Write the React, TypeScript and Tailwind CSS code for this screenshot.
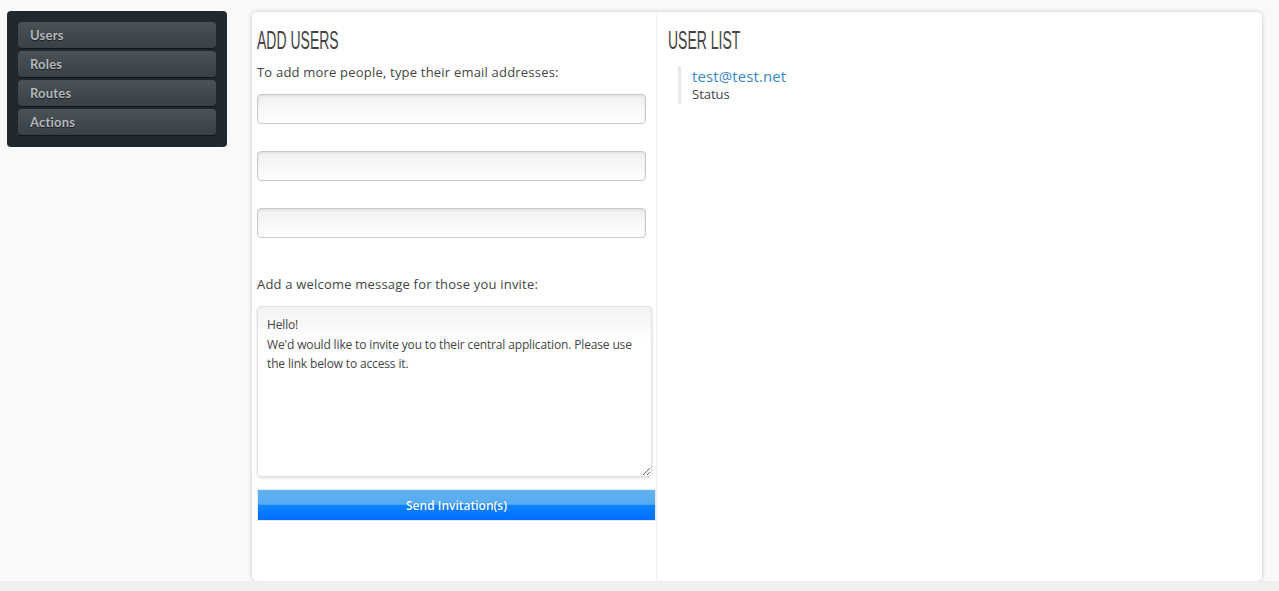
import React from "react";

const navItems = ["Users", "Roles", "Routes", "Actions"];

function EmailInput() {
  return (
    <input
      type="text"
      className="block w-[389px] h-[30px] rounded-[4px] border border-[#c9c9c9] bg-gradient-to-b from-[#f0f0f0] to-white shadow-[inset_0_1px_3px_rgba(0,0,0,0.08)] outline-none"
    />
  );
}

function Heading({ children }: { children: React.ReactNode }) {
  return (
    <h2 className="h-[30px] text-[25px] leading-[30px] text-[#444] font-['Liberation_Sans',sans-serif] whitespace-nowrap">
      <span className="inline-block origin-left scale-x-[0.56]">{children}</span>
    </h2>
  );
}

export default function App() {
  return (
    <div className="min-h-[591px] w-[1279px] bg-[#f9f9f9] flex flex-col font-['Open_Sans',sans-serif] text-[#444]">
      <div className="flex items-start h-[581px]">
        <nav className="ml-[7px] mt-[11px] w-[220px] rounded-[4px] bg-[#22292e] px-[11px] pt-[11px] pb-[12px] flex flex-col gap-[3px]">
          {navItems.map((n) => (
            <div
              key={n}
              className="h-[26px] rounded-[4px] bg-gradient-to-b from-[#4b5257] to-[#3a4146] shadow-[0_1px_1px_rgba(0,0,0,0.5)] pl-[12px] pt-[1px] flex items-center text-[13px] font-bold text-[#b3b8bd] [text-shadow:0_1px_1px_rgba(0,0,0,0.6)] font-['Lato',sans-serif] tracking-[0.2px]"
            >
              {n}
            </div>
          ))}
        </nav>
        <main className="ml-[25px] mt-[12px] w-[1010px] h-[569px] rounded-[5px] bg-white shadow-[0_0_4px_rgba(0,0,0,0.22)] flex pl-[5px]">
          <section className="w-[400px] pt-[13px] border-r border-dotted border-[#e6e6e6]">
            <Heading>ADD USERS</Heading>
            <p className="mt-[9px] text-[13px] leading-[16px] tracking-[0.2px]">
              To add more people, type their email addresses:
            </p>
            <div className="mt-[14px] flex flex-col gap-[27px]">
              <EmailInput />
              <EmailInput />
              <EmailInput />
            </div>
            <p className="mt-[38px] text-[13px] leading-[16px] tracking-[0.2px]">
              Add a welcome message for those you invite:
            </p>
            <textarea
              className="mt-[14px] block w-[395px] h-[171px] rounded-[4px] border border-[#e2e2e2] bg-gradient-to-b from-[#f2f2f2] to-white to-[20%] shadow-[0_1px_3px_rgba(0,0,0,0.15)] px-[9px] pt-[8px] text-[12px] leading-[19.5px] tracking-[-0.15px] text-[#444] outline-none resize-y"
              defaultValue={"Hello!\nWe'd would like to invite you to their central application. Please use the link below to access it."}
            />
            <button className="mt-[12px] block w-[399px] h-[32px] bg-[linear-gradient(to_bottom,#60b2f0_0%,#55aaf2_48%,#0a84ff_50%,#0070ff_100%)] border border-[#e8e8e8] pt-[1px] text-white text-[12px] font-semibold [text-shadow:0_0_1px_rgba(0,0,0,0.2)]">
              Send Invitation(s)
            </button>
          </section>
          <section className="flex-1 pl-[11px] pt-[13px]">
            <Heading>USER LIST</Heading>
            <div className="mt-[11px] ml-[10px] border-l-[3px] border-[#e8e8e8] pl-[11px] py-[1px]">
              <a className="block text-[15px] leading-[18px] text-[#3a87c8] tracking-[0.1px]">test@test.net</a>
              <div className="text-[13px] leading-[18px]">Status</div>
            </div>
          </section>
        </main>
      </div>
      <footer className="h-[10px] bg-[#efefef]" />
    </div>
  );
}
